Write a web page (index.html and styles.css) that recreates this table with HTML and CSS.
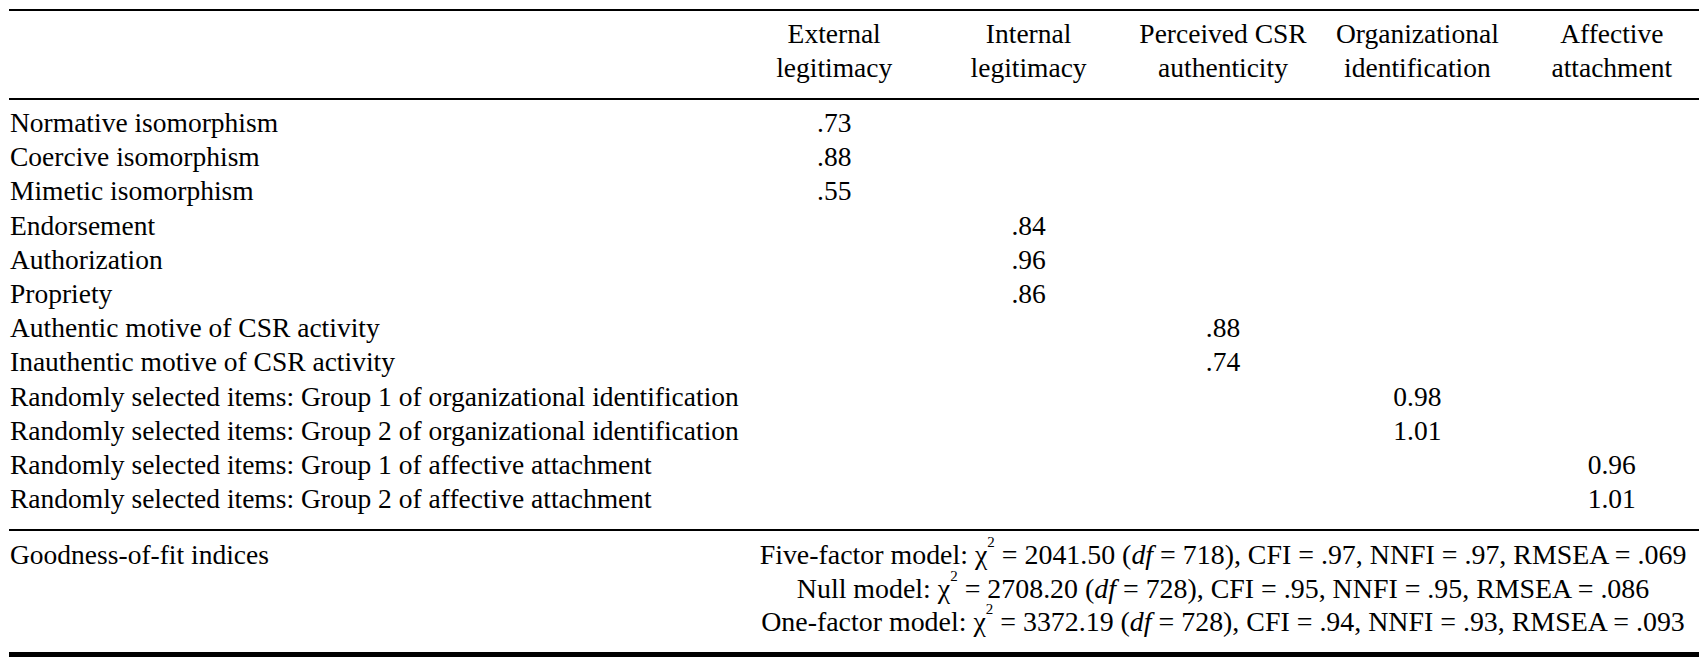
FILE: index.html
```html
<!DOCTYPE html>
<html lang="en">
<head>
<meta charset="utf-8">
<title>Confirmatory factor analysis</title>
<link rel="stylesheet" href="styles.css">
</head>
<body>
<div class="page">
  <div class="tbl">
    <div class="head grid">
      <div class="label"></div>
      <div class="col">External<br>legitimacy</div>
      <div class="col">Internal<br>legitimacy</div>
      <div class="col">Perceived CSR<br>authenticity</div>
      <div class="col">Organizational<br>identification</div>
      <div class="col">Affective<br>attachment</div>
    </div>
    <div class="body grid">
      <div class="label">Normative isomorphism</div><div class="col">.73</div><div class="col"></div><div class="col"></div><div class="col"></div><div class="col"></div>
      <div class="label">Coercive isomorphism</div><div class="col">.88</div><div class="col"></div><div class="col"></div><div class="col"></div><div class="col"></div>
      <div class="label">Mimetic isomorphism</div><div class="col">.55</div><div class="col"></div><div class="col"></div><div class="col"></div><div class="col"></div>
      <div class="label">Endorsement</div><div class="col"></div><div class="col">.84</div><div class="col"></div><div class="col"></div><div class="col"></div>
      <div class="label">Authorization</div><div class="col"></div><div class="col">.96</div><div class="col"></div><div class="col"></div><div class="col"></div>
      <div class="label">Propriety</div><div class="col"></div><div class="col">.86</div><div class="col"></div><div class="col"></div><div class="col"></div>
      <div class="label">Authentic motive of CSR activity</div><div class="col"></div><div class="col"></div><div class="col">.88</div><div class="col"></div><div class="col"></div>
      <div class="label">Inauthentic motive of CSR activity</div><div class="col"></div><div class="col"></div><div class="col">.74</div><div class="col"></div><div class="col"></div>
      <div class="label">Randomly selected items: Group 1 of organizational identification</div><div class="col"></div><div class="col"></div><div class="col"></div><div class="col">0.98</div><div class="col"></div>
      <div class="label">Randomly selected items: Group 2 of organizational identification</div><div class="col"></div><div class="col"></div><div class="col"></div><div class="col">1.01</div><div class="col"></div>
      <div class="label">Randomly selected items: Group 1 of affective attachment</div><div class="col"></div><div class="col"></div><div class="col"></div><div class="col"></div><div class="col">0.96</div>
      <div class="label">Randomly selected items: Group 2 of affective attachment</div><div class="col"></div><div class="col"></div><div class="col"></div><div class="col"></div><div class="col">1.01</div>
    </div>
    <div class="foot">
      <div class="label">Goodness-of-fit indices</div>
      <div class="fit">
        <div>Five-factor model: χ<sup>2</sup> = 2041.50 (<i>df</i> = 718), CFI = .97, NNFI = .97, RMSEA = .069</div>
        <div>Null model: χ<sup>2</sup> = 2708.20 (<i>df</i> = 728), CFI = .95, NNFI = .95, RMSEA = .086</div>
        <div>One-factor model: χ<sup>2</sup> = 3372.19 (<i>df</i> = 728), CFI = .94, NNFI = .93, RMSEA = .093</div>
      </div>
    </div>
  </div>
</div>
</body>
</html>
```
FILE: styles.css
```css
html, body {
  margin: 0;
  padding: 0;
  background: #fff;
}

.page {
  padding: 9px 9px 0 9px;
  font-family: "Liberation Serif", "Times New Roman", serif;
  font-size: 27.5px;
  color: #000;
}

.tbl {
  border-top: 2px solid #000;
  border-bottom: 5px solid #000;
}

.grid {
  display: grid;
  grid-template-columns: 718px repeat(5, 1fr);
}

.head {
  line-height: 33.4px;
  padding: 6.4px 0 13.8px;
  border-bottom: 2px solid #000;
}

.body {
  line-height: 34.2px;
  padding: 6px 0 12.6px;
  border-bottom: 2px solid #000;
}

.label {
  padding-left: 1px;
  white-space: nowrap;
}

.col {
  text-align: center;
  padding-left: 20px;
  white-space: nowrap;
}

.foot {
  display: grid;
  grid-template-columns: 718px 1fr;
  line-height: 33.4px;
  padding: 7.4px 0 13.4px;
}

.fit {
  text-align: center;
  padding-left: 20px;
  white-space: nowrap;
  font-size: 27.9px;
}

.fit sup {
  font-size: 15px;
  line-height: 0;
  vertical-align: 17px;
}

.fit i {
  font-style: italic;
}
```
